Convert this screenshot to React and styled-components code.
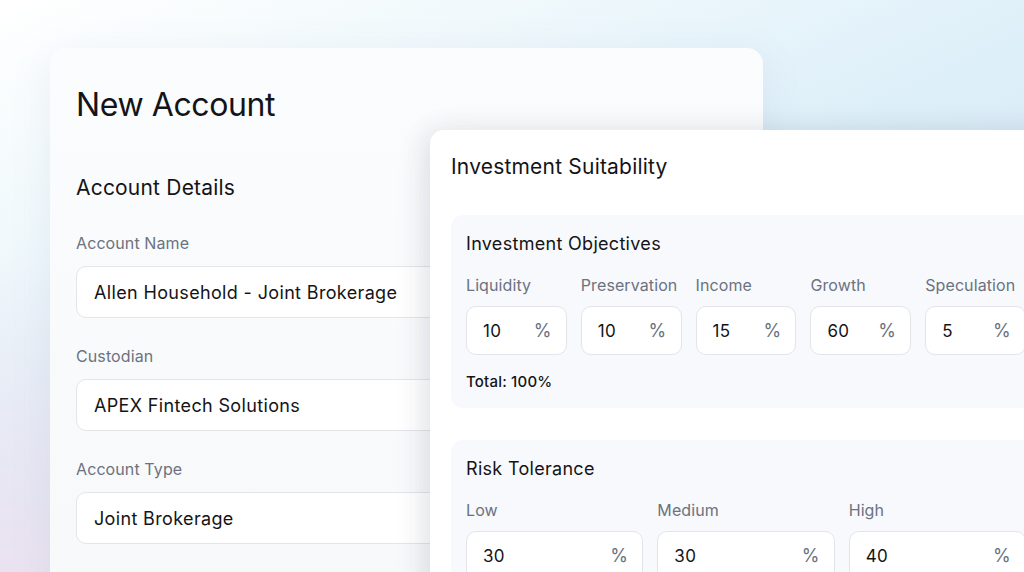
import React from "react";
import styled, { createGlobalStyle } from "styled-components";

const GlobalStyle = createGlobalStyle`
  html, body {
    margin: 0;
    padding: 0;
    overflow: hidden;
  }
  body {
    font-family: Inter, "Noto Sans", sans-serif;
    color: #18181b;
    -webkit-font-smoothing: antialiased;
  }
  * { box-sizing: border-box; }
`;

const accountFields = [
  { label: "Account Name", value: "Allen Household - Joint Brokerage" },
  { label: "Custodian", value: "APEX Fintech Solutions" },
  { label: "Account Type", value: "Joint Brokerage" },
];

const objectives = [
  { label: "Liquidity", value: 10 },
  { label: "Preservation", value: 10 },
  { label: "Income", value: 15 },
  { label: "Growth", value: 60 },
  { label: "Speculation", value: 5 },
];

const risk = [
  { label: "Low", value: 30 },
  { label: "Medium", value: 30 },
  { label: "High", value: 40 },
];

const App = () => {
  const total = objectives.reduce((s, o) => s + o.value, 0);
  return (
    <>
      <GlobalStyle />
      <Canvas>
        <BackCard>
          <PageTitle>New Account</PageTitle>
          <CardHeading>Account Details</CardHeading>
          <FieldStack>
            {accountFields.map((f) => (
              <Field key={f.label}>
                <Label>{f.label}</Label>
                <TextBox>{f.value}</TextBox>
              </Field>
            ))}
          </FieldStack>
        </BackCard>

        <FrontCard>
          <CardHeading>Investment Suitability</CardHeading>
          <Section>
            <SectionTitle>Investment Objectives</SectionTitle>
            <PctGrid cols={objectives.length}>
              {objectives.map((o) => (
                <Field key={o.label}>
                  <Label tight>{o.label}</Label>
                  <PctBox>
                    <span>{o.value}</span>
                    <Pct>%</Pct>
                  </PctBox>
                </Field>
              ))}
            </PctGrid>
            <Total>Total: {total}%</Total>
          </Section>
          <Section>
            <SectionTitle>Risk Tolerance</SectionTitle>
            <PctGrid cols={risk.length}>
              {risk.map((o) => (
                <Field key={o.label}>
                  <Label tight>{o.label}</Label>
                  <PctBox>
                    <span>{o.value}</span>
                    <Pct>%</Pct>
                  </PctBox>
                </Field>
              ))}
            </PctGrid>
          </Section>
        </FrontCard>
      </Canvas>
    </>
  );
};
export default App;

const Canvas = styled.div`
  position: relative;
  width: 100vw;
  height: 100vh;
  overflow: hidden;
  background:
    radial-gradient(ellipse 45% 55% at 0% 100%, #ebe2f0 0%, rgba(235, 226, 240, 0) 100%),
    radial-gradient(ellipse 50% 60% at 100% 100%, #e1def3 0%, rgba(225, 222, 243, 0) 100%),
    linear-gradient(155deg, #ffffff 0%, #f1f9fc 22%, #ddeff9 50%, #dae8f7 80%, #dde4f5 100%);
`;

const BackCard = styled.div`
  position: absolute;
  left: 50px;
  top: 48px;
  width: 713px;
  height: 620px;
  padding: 37px 26px;
  border-radius: 16px;
  background: linear-gradient(180deg, #fbfcfd 0%, #f7f8fa 100%);
  box-shadow: 0 10px 40px rgba(120, 140, 170, 0.12);
`;

const FrontCard = styled.div`
  position: absolute;
  left: 430px;
  top: 130px;
  width: 632px;
  height: 560px;
  padding: 23px 21px;
  border-radius: 14px;
  background: #ffffff;
  box-shadow: -6px 0 24px rgba(60, 70, 90, 0.1), 0 8px 40px rgba(60, 70, 90, 0.08);
`;

const PageTitle = styled.div`
  font-size: 32px;
  line-height: 40px;
  font-weight: 400;
  letter-spacing: -0.4px;
  color: #141416;
`;

const CardHeading = styled.div`
  font-size: 21px;
  line-height: 28px;
  font-weight: 400;
  letter-spacing: 0.2px;
  color: #141416;

  ${PageTitle} + & {
    margin-top: 49px;
  }
`;

const FieldStack = styled.div`
  display: flex;
  flex-direction: column;
  gap: 28px;
  margin-top: 31px;
`;

const Field = styled.div`
  display: flex;
  flex-direction: column;
  min-width: 0;
`;

const Label = styled.div`
  font-size: 16px;
  line-height: 20px;
  letter-spacing: 0.1px;
  color: #6b7280;
  margin-bottom: ${(p) => (p.tight ? "11px" : "13px")};
  white-space: nowrap;
`;

const TextBox = styled.div`
  height: 52px;
  display: flex;
  align-items: center;
  padding: 0 17px;
  border: 1px solid #e3e5e9;
  border-radius: 10px;
  background: #ffffff;
  font-size: 18px;
  letter-spacing: 0.35px;
  color: #141416;
`;

const Section = styled.div`
  margin-top: 34px;
  padding: 17px 15px 16px;
  border-radius: 12px;
  background: #f8f9fc;

  & + & {
    margin-top: 32px;
  }
`;

const SectionTitle = styled.div`
  font-size: 18px;
  line-height: 24px;
  font-weight: 400;
  letter-spacing: 0.3px;
  color: #141416;
  margin-bottom: 19px;
`;

const PctGrid = styled.div`
  display: grid;
  grid-template-columns: repeat(${(p) => p.cols}, 1fr);
  gap: 14px;
`;

const PctBox = styled.div`
  height: 49px;
  display: flex;
  align-items: center;
  justify-content: space-between;
  padding: 0 14px 0 16px;
  border: 1px solid #e3e5e9;
  border-radius: 10px;
  background: #ffffff;
  font-size: 17px;
  letter-spacing: 0.3px;
  color: #141416;
`;

const Pct = styled.span`
  font-size: 18px;
  color: #6b7280;
`;

const Total = styled.div`
  margin-top: 17px;
  font-size: 15px;
  line-height: 20px;
  font-weight: 500;
  letter-spacing: 0.2px;
  color: #141416;
`;
